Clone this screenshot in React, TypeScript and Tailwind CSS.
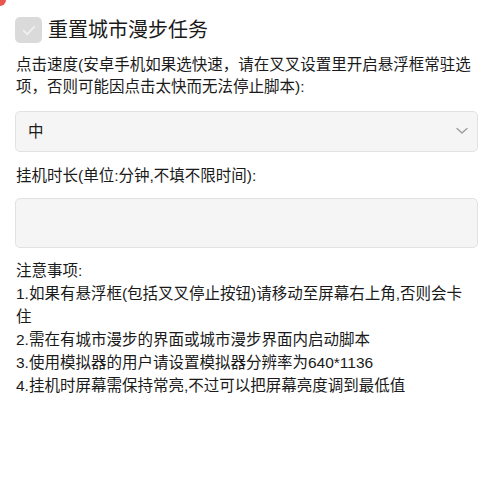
import React, { useState } from "react";

const font = "font-['Liberation_Sans','Noto_Sans_CJK_SC',sans-serif]";

const notes = [
    "1.如果有悬浮框(包括叉叉停止按钮)请移动至屏幕右上角,否则会卡住",
    "2.需在有城市漫步的界面或城市漫步界面内启动脚本",
    "3.使用模拟器的用户请设置模拟器分辨率为640*1136",
    "4.挂机时屏幕需保持常亮,不过可以把屏幕亮度调到最低值",
];

const App: React.FC = () => {
    const [speed, setSpeed] = useState("中");
    const [minutes, setMinutes] = useState("");

    return (
        <div className={`relative min-h-[500px] bg-white pl-[15px] pr-[11px] pt-[17px] text-[#1a1a1a] ${font}`}>
            {/* red corner of the floating button peeking in */}
            <div className="absolute -left-[6px] -top-[6px] h-[12px] w-[12px] rounded-full bg-[#e8574e]" />

            {/* task toggle (disabled) */}
            <label className="flex h-[26px] items-center gap-[6px]">
                <span className="flex h-[26px] w-[27px] items-center justify-center rounded-[5px] bg-[#dadada]">
                    <svg width="16" height="16" viewBox="0 0 16 16" fill="none">
                        <path d="M2.5 8.5l3.8 3.8L13.5 4.5" stroke="#f2f2f2" strokeWidth="1.6" strokeLinecap="round" strokeLinejoin="round" />
                    </svg>
                </span>
                <span className="text-[20px] leading-[26px]">重置城市漫步任务</span>
            </label>

            <p className="mt-[11px] pl-px pr-[4px] text-[15.5px] leading-[22px]">
                点击速度(安卓手机如果选快速，请在叉叉设置里开启悬浮框常驻选项，否则可能因点击太快而无法停止脚本):
            </p>

            <div className="relative mt-[13px]">
                <select
                    value={speed}
                    onChange={(e) => setSpeed(e.target.value)}
                    className="h-[41px] w-full appearance-none rounded-[5px] border border-[#e2e2e2] bg-[#f5f5f5] pl-[12px] text-[15.5px] outline-none"
                >
                    <option>慢</option>
                    <option>中</option>
                    <option>快</option>
                </select>
                <svg className="pointer-events-none absolute right-[10px] top-[16px]" width="12" height="8" viewBox="0 0 12 8" fill="none">
                    <path d="M1 1.5l5 4.5 5-4.5" stroke="#9a9a9a" strokeWidth="1.3" strokeLinecap="round" strokeLinejoin="round" />
                </svg>
            </div>

            <p className="mt-[13px] pl-px text-[15.5px] leading-[22px]">挂机时长(单位:分钟,不填不限时间):</p>
            <input
                value={minutes}
                onChange={(e) => setMinutes(e.target.value)}
                className="mt-[11px] block h-[50px] w-full rounded-[5px] border border-[#e2e2e2] bg-[#f5f5f5] px-[12px] text-[15.5px] outline-none"
            />

            <div className="mt-[11px] pl-px pr-[14px] text-[15.5px] leading-[23px]">
                <p>注意事项:</p>
                {notes.map((n) => (
                    <p key={n}>{n}</p>
                ))}
            </div>
        </div>
    );
};

export default App;
